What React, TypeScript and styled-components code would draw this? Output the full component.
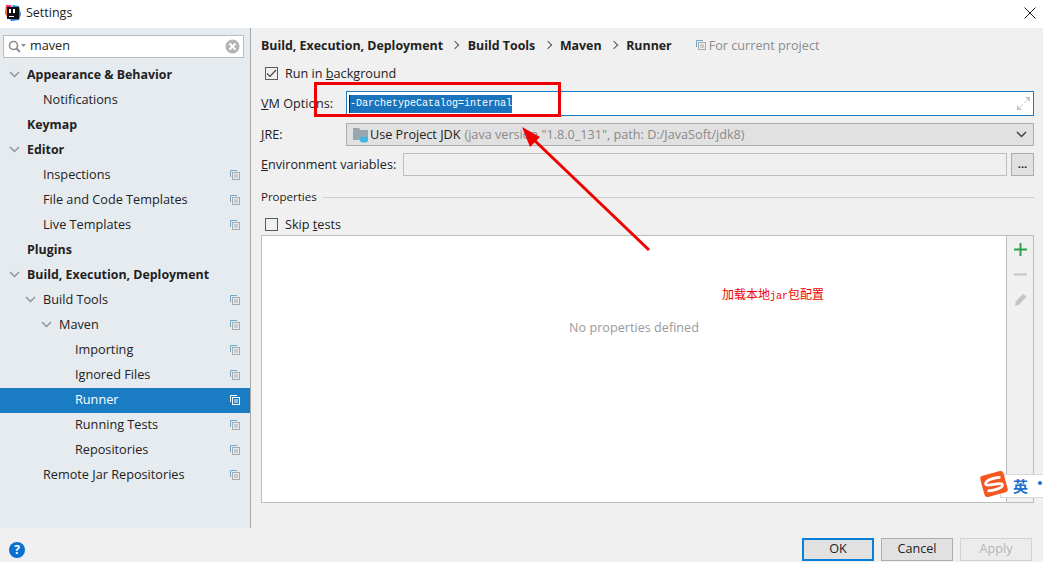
import React from 'react';
import styled, { createGlobalStyle } from 'styled-components';

const GlobalStyle = createGlobalStyle`
  html, body {
    margin: 0;
    padding: 0;
    background: #f0f0f0;
    overflow: hidden;
  }
  * {
    box-sizing: border-box;
  }
`;

type TreeItem = { label: string; level: number; bold?: boolean; arrow?: boolean; copy?: boolean; selected?: boolean };

const treeItems: TreeItem[] = [
  { label: 'Appearance & Behavior', level: 1, bold: true, arrow: true },
  { label: 'Notifications', level: 2 },
  { label: 'Keymap', level: 1, bold: true },
  { label: 'Editor', level: 1, bold: true, arrow: true },
  { label: 'Inspections', level: 2, copy: true },
  { label: 'File and Code Templates', level: 2, copy: true },
  { label: 'Live Templates', level: 2, copy: true },
  { label: 'Plugins', level: 1, bold: true },
  { label: 'Build, Execution, Deployment', level: 1, bold: true, arrow: true },
  { label: 'Build Tools', level: 2, arrow: true, copy: true },
  { label: 'Maven', level: 3, arrow: true, copy: true },
  { label: 'Importing', level: 4, copy: true },
  { label: 'Ignored Files', level: 4, copy: true },
  { label: 'Runner', level: 4, copy: true, selected: true },
  { label: 'Running Tests', level: 4, copy: true },
  { label: 'Repositories', level: 4, copy: true },
  { label: 'Remote Jar Repositories', level: 2, copy: true },
];

const indents: Record<number, number> = { 1: 27, 2: 43, 3: 59, 4: 75 };

const Chevron = ({ color = '#8f959b' }: { color?: string }) => (
  <svg width="11" height="7" viewBox="0 0 11 7" fill="none">
    <path d="M1 1l4.5 4.5L10 1" stroke={color} strokeWidth="1.5" />
  </svg>
);

const CopyIcon = ({ selected }: { selected?: boolean }) => (
  <svg width="10" height="10" viewBox="0 0 10 10" fill="none">
    <path d="M.5 7V.5H7" stroke={selected ? '#fff' : '#6fa8cf'} />
    <rect x="2.5" y="2.5" width="7" height="7" stroke={selected ? '#fff' : '#a9a9a9'} />
    <path d="M4 5h4M4 7h4" stroke={selected ? '#fff' : '#a9a9a9'} />
  </svg>
);

const Logo = () => (
  <svg width="16" height="16" viewBox="0 0 16 16">
    <path d="M1 0l5 0 2 6-5 6-3-3z" fill="#f0346f" />
    <path d="M7 0l7 1 2 8-6 1z" fill="#1f8fe6" />
    <path d="M2 9l4 7 8-1 2-6-8-2z" fill="#2a6fe0" />
    <path d="M0 5l3-2 2 7-3 3z" fill="#f97a2c" />
    <rect x="2" y="2" width="12" height="12" fill="#111" />
    <path d="M4 4h2v4H4zM8 4h2v4H8zM4 11h5v1H4z" fill="#fff" />
  </svg>
);

const App = () => (
  <>
    <GlobalStyle />
    <Window>
      <TitleBar>
        <Logo />
        <TitleText>Settings</TitleText>
        <CloseButton>
          <svg width="12" height="12" viewBox="0 0 12 12" fill="none">
            <path d="M.5.5l11 11M11.5.5l-11 11" stroke="#222" />
          </svg>
        </CloseButton>
      </TitleBar>
      <Body>
        <Sidebar>
          <SearchBox>
            <svg width="18" height="14" viewBox="0 0 18 14" fill="none">
              <circle cx="5.5" cy="5.5" r="4" stroke="#8c8c8c" strokeWidth="1.6" />
              <path d="M8.5 8.5l3.5 3.5" stroke="#8c8c8c" strokeWidth="2" />
              <path d="M13 4h5l-2.5 3z" fill="#8c8c8c" />
            </svg>
            <SearchText>maven</SearchText>
            <svg width="15" height="15" viewBox="0 0 15 15">
              <circle cx="7.5" cy="7.5" r="7" fill="#b4b4b4" />
              <path d="M4.5 4.5l6 6M10.5 4.5l-6 6" stroke="#fff" strokeWidth="2" />
            </svg>
          </SearchBox>
          <Tree>
            {treeItems.map((item) => (
              <TreeRow key={item.label} $level={item.level} $selected={item.selected}>
                {item.arrow && (
                  <ArrowSlot $level={item.level}>
                    <Chevron />
                  </ArrowSlot>
                )}
                <TreeLabel $bold={item.bold} $selected={item.selected}>{item.label}</TreeLabel>
                {item.copy && (
                  <CopySlot>
                    <CopyIcon selected={item.selected} />
                  </CopySlot>
                )}
              </TreeRow>
            ))}
          </Tree>
        </Sidebar>
        <Main>
          <Breadcrumbs>
            <Crumb>Build, Execution, Deployment</Crumb>
            <Sep />
            <Crumb>Build Tools</Crumb>
            <Sep />
            <Crumb>Maven</Crumb>
            <Sep />
            <Crumb>Runner</Crumb>
            <ProjectNote>
              <CopyIcon />
              For current project
            </ProjectNote>
          </Breadcrumbs>
          <CheckRow>
            <CheckBox>
              <svg width="11" height="9" viewBox="0 0 11 9" fill="none">
                <path d="M1 4.5l3 3L10 1" stroke="#444" strokeWidth="1.2" />
              </svg>
            </CheckBox>
            <Label>Run in <u>b</u>ackground</Label>
          </CheckRow>
          <FormRow>
            <FieldLabel><u>V</u>M Options:</FieldLabel>
            <VmInput>
              <Selection>-DarchetypeCatalog=internal</Selection>
              <svg width="13" height="13" viewBox="0 0 13 13">
                <path d="M8 0h5v5zM0 13V8l5 5z" fill="#c4c4c4" />
                <path d="M10 3l-3 3M3 10l3-3" stroke="#d0d0d0" />
              </svg>
            </VmInput>
          </FormRow>
          <JreRow>
            <FieldLabel><u>J</u>RE:</FieldLabel>
            <JreSelect>
              <svg width="16" height="16" viewBox="0 0 16 16">
                <path d="M0 1h6l1.500 2H15v10H0z" fill="#9aa7b0" />
                <path d="M7 10h8v3a2.500 2.500 0 0 1-2.500 2.500h-3A2.500 2.500 0 0 1 7 13z" fill="#40b6e0" />
              </svg>
              <JreText>Use Project JDK</JreText>
              <JreHint>(java version "1.8.0_131", path: D:/JavaSoft/jdk8)</JreHint>
              <JreArrow>
                <Chevron color="#444" />
              </JreArrow>
            </JreSelect>
          </JreRow>
          <EnvRow>
            <EnvLabel><u>E</u>nvironment variables:</EnvLabel>
            <EnvInput />
            <DotsButton>...</DotsButton>
          </EnvRow>
          <GroupRow>
            <GroupTitle>Properties</GroupTitle>
            <GroupLine />
          </GroupRow>
          <SkipRow>
            <CheckBox />
            <Label>Skip <u>t</u>ests</Label>
          </SkipRow>
          <TablePanel>
            <TableArea>No properties defined</TableArea>
            <TableTools>
              <svg width="13" height="13" viewBox="0 0 13 13">
                <path d="M5.500 0h2v5.500H13v2H7.500V13h-2V7.500H0v-2h5.500z" fill="#2f9e4f" />
              </svg>
              <svg width="13" height="13" viewBox="0 0 13 13">
                <path d="M0 5.500h13v2H0z" fill="#c4c4c4" />
              </svg>
              <svg width="13" height="13" viewBox="0 0 13 13">
                <path d="M9 1l3.500 2.500-7 8L1 13l.8-4.500z" fill="#c4c4c4" />
              </svg>
            </TableTools>
          </TablePanel>
        </Main>
      </Body>
      <Footer>
        <HelpIcon>?</HelpIcon>
        <FooterButtons>
          <DialogButton $variant="primary">OK</DialogButton>
          <DialogButton $variant="normal">Cancel</DialogButton>
          <DialogButton $variant="disabled">Apply</DialogButton>
        </FooterButtons>
      </Footer>

      <RedBox />
      <ArrowLayer width="1043" height="562" viewBox="0 0 1043 562" fill="none">
        <path d="M649 250L532 138" stroke="#f00000" strokeWidth="3" />
        <path d="M522 127l18 10-10 10z" fill="#f00000" />
      </ArrowLayer>
      <RedNote>加载本地<NoteMono>jar</NoteMono>包配置</RedNote>
      <ImeWidget>
        <ImeLogo>
          <svg width="30" height="30" viewBox="0 0 30 30">
            <g transform="rotate(-15 15 15)">
              <rect x="3" y="4" width="24" height="22" rx="3" fill="#f4571f" />
              <path d="M23 10c-5-1-15-1-16 2.500-1 4 16 1.500 16 5.500 0 3-10 3.500-16 2" stroke="#fff" strokeWidth="2.800" fill="none" />
            </g>
          </svg>
        </ImeLogo>
        <ImeChar>英</ImeChar>
        <ImeDot />
      </ImeWidget>
    </Window>
  </>
);

export default App;

const Window = styled.div`
  position: relative;
  width: 1043px;
  height: 562px;
  display: flex;
  flex-direction: column;
  overflow: hidden;
  font-family: "Open Sans", "Noto Sans", sans-serif;
  font-size: 12.65px;
  color: #222;
`;

const TitleBar = styled.div`
  height: 28px;
  flex: none;
  background: #fff;
  display: flex;
  align-items: center;
  padding: 0 7px 3px 5px;
`;

const TitleText = styled.span`
  margin-left: 5px;
  font-size: 12.5px;
`;

const CloseButton = styled.div`
  margin-left: auto;
  display: flex;
`;

const Body = styled.div`
  flex: 1;
  display: flex;
  min-height: 0;
`;

const Sidebar = styled.div`
  width: 251px;
  flex: none;
  background: #e6ebf0;
  border-right: 1px solid #a8a8a8;
  padding-top: 7px;
`;

const SearchBox = styled.div`
  margin-left: 3px;
  width: 241px;
  height: 23px;
  background: #fff;
  border: 1px solid #bcbcbc;
  display: flex;
  align-items: center;
  padding: 0 3px 0 4px;
`;

const SearchText = styled.span`
  flex: 1;
  margin-left: 4px;
  padding-bottom: 3px;
  font-size: 12.65px;
  color: #222;
`;

const Tree = styled.div`
  margin-top: 5px;
`;

const TreeRow = styled.div<{ $level: number; $selected?: boolean }>`
  position: relative;
  height: 25px;
  display: flex;
  align-items: center;
  padding-left: ${(p) => indents[p.$level]}px;
  padding-right: 10px;
  background: ${(p) => (p.$selected ? '#1a7dc4' : 'transparent')};
`;

const ArrowSlot = styled.span<{ $level: number }>`
  position: absolute;
  left: ${(p) => indents[p.$level] - 18}px;
  top: 8px;
  display: flex;
`;

const TreeLabel = styled.span<{ $bold?: boolean; $selected?: boolean }>`
  font-weight: ${(p) => (p.$bold ? 700 : 400)};
  color: ${(p) => (p.$selected ? '#fff' : '#222')};
  font-size: ${(p) => (p.$bold ? '12.4px' : '12.7px')};
  padding-bottom: ${(p) => (p.$bold ? '2px' : '4px')};
  white-space: nowrap;
`;

const CopySlot = styled.span`
  margin-left: auto;
  padding-bottom: 2px;
  display: flex;
`;

const Main = styled.div`
  flex: 1;
  padding: 0 9px 0 10px;
  min-width: 0;
`;

const Breadcrumbs = styled.div`
  height: 34px;
  display: flex;
  align-items: center;
`;

const Crumb = styled.span`
  font-weight: 700;
  font-size: 12.4px;
  white-space: nowrap;
`;

const Sep = styled.span`
  width: 24.6px;
  display: flex;
  justify-content: center;
  &::before {
    content: '';
    width: 5px;
    height: 5px;
    border-top: 1px solid #555;
    border-right: 1px solid #555;
    transform: rotate(45deg);
  }
`;

const ProjectNote = styled.span`
  margin-left: 24px;
  display: flex;
  align-items: center;
  gap: 3px;
  color: #8c8c8c;
  white-space: nowrap;
`;

const CheckRow = styled.div`
  height: 22px;
  display: flex;
  align-items: center;
  padding-left: 4px;
  gap: 7px;
`;

const CheckBox = styled.span`
  width: 13px;
  height: 13px;
  border: 1px solid #5a5a5a;
  display: flex;
  align-items: center;
  justify-content: center;
  background: transparent;
`;

const Label = styled.span`
  white-space: nowrap;
`;

const FormRow = styled.div`
  margin-top: 7px;
  display: flex;
  align-items: center;
  height: 25px;
`;

const FieldLabel = styled.span`
  width: 85px;
  flex: none;
  padding-bottom: 2px;
  white-space: nowrap;
`;

const VmInput = styled.div`
  flex: 1;
  height: 25px;
  background: #fff;
  border: 1px solid #1a7dc4;
  display: flex;
  align-items: center;
  justify-content: space-between;
  padding: 0 3px 0 2px;
`;

const Selection = styled.span`
  background: #1a73bd;
  color: #fff;
  border-left: 1px solid #10203a;
  font-family: "Liberation Mono", monospace;
  font-size: 10px;
  line-height: 18px;
  height: 18px;
`;

const JreRow = styled.div`
  margin-top: 7px;
  display: flex;
  align-items: center;
  height: 23px;
`;

const JreSelect = styled.div`
  flex: 1;
  height: 23px;
  background: #e1e1e1;
  border: 1px solid #adadad;
  display: flex;
  align-items: center;
  padding: 0 6px;
`;

const JreText = styled.span`
  margin-left: 1px;
  margin-right: 4px;
  padding-bottom: 2px;
  white-space: nowrap;
`;

const JreHint = styled.span`
  color: #8a8a8a;
  padding-bottom: 2px;
  white-space: nowrap;
`;

const JreArrow = styled.span`
  margin-left: auto;
  display: flex;
`;

const EnvRow = styled.div`
  margin-top: 7px;
  display: flex;
  align-items: center;
  height: 23px;
`;

const EnvLabel = styled.span`
  width: 142px;
  flex: none;
  padding-bottom: 2px;
  white-space: nowrap;
`;

const EnvInput = styled.div`
  flex: 1;
  height: 23px;
  border: 1px solid #bdbdbd;
`;

const DotsButton = styled.div`
  width: 23px;
  height: 23px;
  margin-left: 4px;
  background: #e1e1e1;
  border: 1px solid #adadad;
  display: flex;
  align-items: center;
  justify-content: center;
  font-size: 11px;
  font-weight: 700;
  padding-bottom: 3px;
`;

const GroupRow = styled.div`
  margin-top: 12px;
  height: 18px;
  display: flex;
  align-items: center;
  gap: 6px;
`;

const GroupTitle = styled.span`
  font-size: 11.5px;
  padding-bottom: 2px;
`;

const GroupLine = styled.span`
  flex: 1;
  height: 1px;
  background: #cdcdcd;
`;

const SkipRow = styled.div`
  margin-top: 7px;
  height: 22px;
  display: flex;
  align-items: center;
  padding-left: 4px;
  gap: 7px;
`;

const TablePanel = styled.div`
  height: 268px;
  border: 1px solid #bdbdbd;
  display: flex;
`;

const TableArea = styled.div`
  flex: 1;
  background: #fff;
  color: #9a9a9a;
  display: flex;
  align-items: center;
  justify-content: center;
  padding-bottom: 85px;
`;

const TableTools = styled.div`
  width: 27px;
  flex: none;
  border-left: 1px solid #bdbdbd;
  display: flex;
  flex-direction: column;
  align-items: center;
  padding-top: 7px;
  gap: 12px;
`;

const Footer = styled.div`
  height: 34px;
  flex: none;
  display: flex;
  align-items: center;
  justify-content: space-between;
  padding: 10px 11px 1px 9px;
  background: #f0f0f0;
`;

const HelpIcon = styled.span`
  width: 16px;
  height: 16px;
  border-radius: 50%;
  background: #0a6fcf;
  color: #fff;
  display: flex;
  align-items: center;
  justify-content: center;
  font-size: 12px;
  font-weight: 700;
`;

const FooterButtons = styled.div`
  display: flex;
  gap: 7px;
`;

const DialogButton = styled.div<{ $variant: 'primary' | 'normal' | 'disabled' }>`
  width: 72px;
  height: 23px;
  display: flex;
  align-items: center;
  justify-content: center;
  padding-bottom: 4px;
  font-size: 12.65px;
  background: ${(p) => (p.$variant === 'disabled' ? '#ececec' : '#e1e1e1')};
  color: ${(p) => (p.$variant === 'disabled' ? '#b5b5b5' : '#222')};
  border: ${(p) =>
    p.$variant === 'primary'
      ? '2px solid #0a7fd8'
      : p.$variant === 'normal'
        ? '1px solid #adadad'
        : '1px solid #d2d2d2'};
`;

const RedBox = styled.div`
  position: absolute;
  left: 314px;
  top: 82px;
  width: 247px;
  height: 35px;
  border: 3px solid #f00000;
  pointer-events: none;
`;

const ArrowLayer = styled.svg`
  position: absolute;
  left: 0;
  top: 0;
  pointer-events: none;
`;

const RedNote = styled.div`
  position: absolute;
  left: 722px;
  top: 286px;
  color: #f00000;
  font-family: "Noto Sans CJK SC", sans-serif;
  font-size: 12px;
  line-height: 16px;
  white-space: nowrap;
`;

const NoteMono = styled.span`
  font-family: "Liberation Mono", monospace;
  font-size: 10px;
`;

const ImeWidget = styled.div`
  position: absolute;
  left: 1000px;
  top: 474px;
  width: 43px;
  height: 24px;
  background: #fff;
  border: 1px solid #d8d8d8;
  border-right: none;
  display: flex;
  align-items: center;
`;

const ImeLogo = styled.span`
  position: absolute;
  left: -22px;
  top: -6px;
  display: flex;
`;

const ImeChar = styled.span`
  margin-left: 12px;
  padding-bottom: 2px;
  color: #1d6fc9;
  font-family: "Noto Sans CJK SC", sans-serif;
  font-size: 15px;
  font-weight: 700;
`;

const ImeDot = styled.span`
  width: 4px;
  height: 4px;
  margin-left: 10px;
  margin-bottom: 6px;
  border-radius: 50%;
  background: #1d6fc9;
`;
